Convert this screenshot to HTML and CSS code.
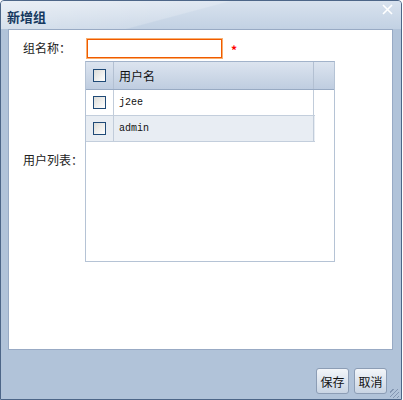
FILE: index.html
```html
<!DOCTYPE html>
<html lang="zh-CN">
<head>
    <meta charset="UTF-8">
    <title>新增组</title>
    <link rel="stylesheet" href="styles.css">
</head>
<body>
    <div class="window">
        <div class="titlebar">
            <span class="title">新增组</span>
            <svg class="close" width="11" height="11" viewBox="0 0 11 11">
                <path d="M1 1 L10 10 M10 1 L1 10" stroke="#fff" stroke-width="1.6" fill="none"/>
            </svg>
        </div>

        <div class="body">
            <div class="form">
                <label class="label">组名称：</label>
                <div class="field">
                    <input type="text" class="name-input">
                    <span class="required">*</span>
                </div>

                <label class="label label-users">用户列表：</label>
                <div class="grid">
                    <div class="grid-head">
                        <div class="col-check"><span class="check"></span></div>
                        <div class="col-name">用户名</div>
                        <div class="col-scroll"></div>
                    </div>
                    <div class="row">
                        <div class="col-check"><span class="check"></span></div>
                        <div class="col-name mono">j2ee</div>
                    </div>
                    <div class="row alt">
                        <div class="col-check"><span class="check"></span></div>
                        <div class="col-name mono">admin</div>
                    </div>
                </div>
            </div>
        </div>

        <div class="footer">
            <button class="btn">保存</button>
            <button class="btn">取消</button>
            <span class="grip"></span>
        </div>
    </div>
</body>
</html>
```

FILE: styles.css
```css
/* Base */
body {
    margin: 0;
    padding: 0;
    background: #fff;
    font-family: "Noto Sans CJK SC", "DejaVu Sans", sans-serif;
    font-size: 12px;
    color: #000;
}

/* Window frame */
.window {
    width: 400px;
    height: 398px;
    background: #b1c3d9;
    border: 1px solid #4d6688;
    border-radius: 4px 4px 0 0;
    display: flex;
    flex-direction: column;
    position: relative;
}

.titlebar {
    height: 28px;
    display: flex;
    align-items: center;
    justify-content: space-between;
    padding: 0 8px 0 6px;
    background:
        linear-gradient(165deg, rgba(255, 255, 255, 0.45) 0%, rgba(255, 255, 255, 0.2) 45%, rgba(255, 255, 255, 0) 46%),
        linear-gradient(to bottom, #d8e2ee, #c2d1e3);
    border-radius: 3px 3px 0 0;
}

.title {
    font-size: 13px;
    font-weight: bold;
    color: #15385f;
    margin-top: 2px;
}

.close {
    align-self: flex-start;
    margin-top: 3px;
}

/* White content area */
.body {
    height: 319px;
    margin: 0 8px 0 7px;
    background: #fff;
    border: 1px solid #98aac4;
}

.form {
    display: grid;
    grid-template-columns: 62px 250px;
    padding: 8px 0 0 14px;
}

.label {
    line-height: 20px;
    color: #222;
}

.label-users {
    align-self: center;
}

.field {
    display: flex;
    align-items: center;
    margin-left: 2px;
}

.name-input {
    width: 135px;
    height: 19px;
    padding: 0 2px;
    margin: 0;
    box-sizing: border-box;
    border: 1px solid #f05a00;
    box-shadow: 0 0 0 1px #f9b070;
    outline: none;
    font-size: 12px;
}

.required {
    color: #f00;
    margin-left: 9px;
    font-size: 12px;
    font-weight: bold;
    padding-top: 3px;
}

/* User grid */
.grid {
    margin-top: 3px;
    height: 199px;
    border: 1px solid #b5c3d5;
    border-top-color: #a2b3ca;
}

.grid-head {
    display: flex;
    height: 27px;
    background: linear-gradient(to bottom, #dce4ef, #bfcde0);
    border-bottom: 1px solid #98aac3;
}

.col-check {
    width: 27px;
    display: flex;
    align-items: center;
    justify-content: center;
    border-right: 1px solid #c1ccda;
}

.col-name {
    width: 194px;
    padding-left: 5px;
    display: flex;
    align-items: center;
    border-right: 1px solid #c1ccda;
}

.grid-head .col-check,
.grid-head .col-name {
    border-right-color: #b3c0d2;
}

.grid-head .col-name {
    font-size: 12px;
    color: #111;
}

.col-scroll {
    flex: 1;
}

.row {
    display: flex;
    width: 229px;
    height: 25px;
    border-bottom: 1px solid #c3cedc;
    background: #fff;
}

.row.alt {
    background: #e8edf3;
}

.mono {
    font-family: "Liberation Mono", monospace;
    font-size: 10px;
    color: #111;
}

.check {
    width: 11px;
    height: 11px;
    border: 1px solid #1f4a77;
    background: linear-gradient(135deg, #dcdcd8, #ffffff);
}

/* Footer buttons */
.footer {
    flex: 1;
    display: flex;
    justify-content: flex-end;
    align-items: flex-start;
    gap: 5px;
    padding: 18px 14px 0 0;
}

.btn {
    width: 33px;
    height: 26px;
    padding: 0;
    font-family: "Noto Sans CJK SC", sans-serif;
    font-size: 12px;
    color: #111;
    border: 1px solid #8c9db5;
    border-radius: 3px;
    background: linear-gradient(to bottom, #f2f5f9, #c9d5e4);
    cursor: pointer;
}

.grip {
    position: absolute;
    right: 2px;
    bottom: 1px;
    width: 9px;
    height: 9px;
    background: repeating-linear-gradient(135deg, transparent 0 2px, #8396b2 2px 3px);
}
```
